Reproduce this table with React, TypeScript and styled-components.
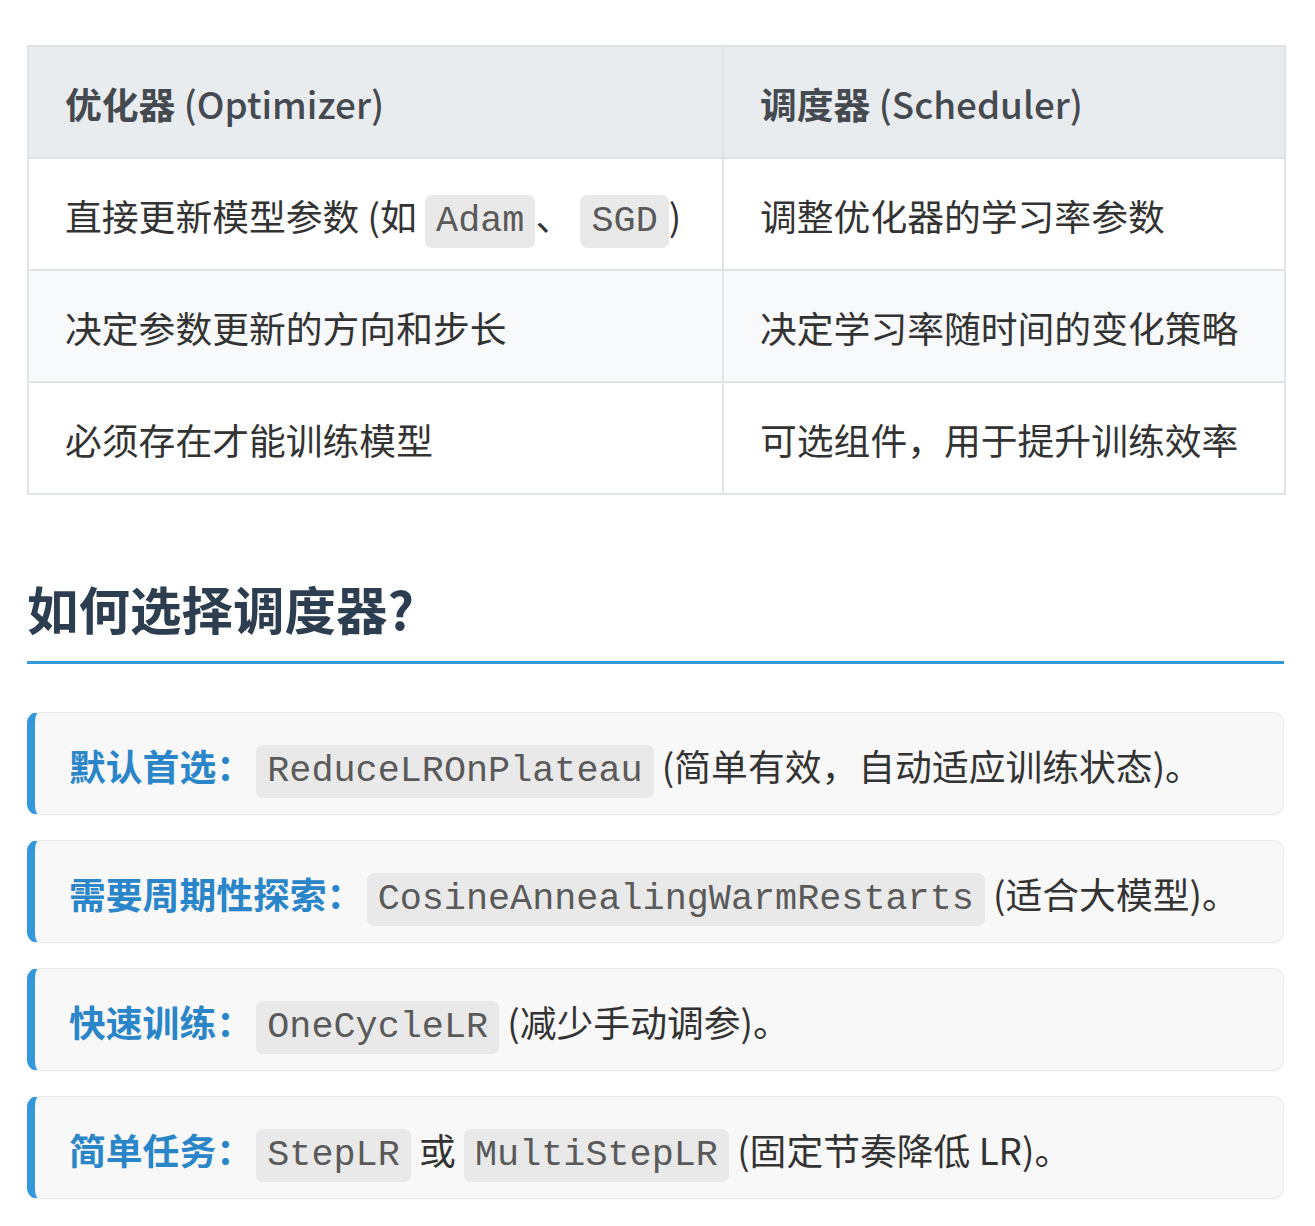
import React from "react";
import styled, { createGlobalStyle } from "styled-components";

const Global = createGlobalStyle`
  html, body { margin: 0; padding: 0; background: #ffffff; }
  body {
    font-family: "Noto Sans CJK SC", "Noto Sans", sans-serif;
    color: #333333;
  }
`;

const Page = styled.div`
  width: 1257px;
  padding: 45px 31px 20px 27px;
`;

const Table = styled.table`
  width: 1257px;
  border-collapse: collapse;
  table-layout: fixed;
  font-size: 36.8px;
  line-height: 56px;
`;

const Col = styled.col<{ $w: number }>`
  width: ${(p) => p.$w}px;
`;

const Th = styled.th`
  background: #e9ecef;
  border: 2px solid #dfe2e5;
  padding: 28px 36px 26px;
  text-align: left;
  font-weight: 700;
  color: #454a50;
`;

const ThLatin = styled.span`
  font-weight: 500;
`;

const Tr = styled.tr<{ $alt?: boolean }>`
  background: ${(p) => (p.$alt ? "#f8f9fb" : "#ffffff")};
`;

const Td = styled.td`
  border: 2px solid #e1e4e7;
  padding: 28px 36px 26px;
  color: #333333;
  white-space: nowrap;
`;

const Code = styled.code`
  font-family: "Liberation Mono", "Courier New", monospace;
  font-size: 36.8px;
  line-height: 1;
  color: #5a5a5a;
  background: #e9e9e9;
  border-radius: 7px;
  padding: 5px 11px 6px;
`;

const Heading = styled.h2`
  margin: 82px 0 0;
  padding-bottom: 22px;
  font-size: 51.5px;
  line-height: 62px;
  font-weight: 700;
  color: #2c3e50;
  border-bottom: 3px solid #3498db;
`;

const CardList = styled.div`
  display: flex;
  flex-direction: column;
  gap: 25px;
  margin-top: 48px;
`;

const Card = styled.div`
  background: #f8f8f8;
  border: 1px solid #ececec;
  border-left: 8px solid #3498db;
  border-radius: 11px;
  padding: 22px 35px 19px 34px;
  font-size: 36.8px;
  line-height: 60px;
  color: #333333;
  white-space: nowrap;
  box-shadow: 0 1px 2px rgba(0, 0, 0, 0.04);
`;

const Label = styled.strong`
  color: #2a86c8;
  font-weight: 700;
  margin-right: -5px;
`;

const rows: { left: React.ReactNode; right: string }[] = [
  {
    left: (
      <>
        直接更新模型参数 (如 <Code>Adam</Code>、 <Code>SGD</Code>)
      </>
    ),
    right: "调整优化器的学习率参数",
  },
  { left: "决定参数更新的方向和步长", right: "决定学习率随时间的变化策略" },
  { left: "必须存在才能训练模型", right: "可选组件，用于提升训练效率" },
];

export default function App() {
  return (
    <Page>
      <Global />
      <Table>
        <colgroup>
          <Col $w={695} />
          <Col $w={562} />
        </colgroup>
        <thead>
          <tr>
            <Th>
              优化器 <ThLatin>(Optimizer)</ThLatin>
            </Th>
            <Th>
              调度器 <ThLatin>(Scheduler)</ThLatin>
            </Th>
          </tr>
        </thead>
        <tbody>
          {rows.map((r, i) => (
            <Tr key={i} $alt={i % 2 === 1}>
              <Td>{r.left}</Td>
              <Td>{r.right}</Td>
            </Tr>
          ))}
        </tbody>
      </Table>

      <Heading>如何选择调度器?</Heading>

      <CardList>
        <Card>
          <Label>默认首选：</Label> <Code>ReduceLROnPlateau</Code> (简单有效，自动适应训练状态)。
        </Card>
        <Card>
          <Label>需要周期性探索：</Label> <Code>CosineAnnealingWarmRestarts</Code> (适合大模型)。
        </Card>
        <Card>
          <Label>快速训练：</Label> <Code>OneCycleLR</Code> (减少手动调参)。
        </Card>
        <Card>
          <Label>简单任务：</Label> <Code>StepLR</Code> 或 <Code>MultiStepLR</Code> (固定节奏降低 LR)。
        </Card>
      </CardList>
    </Page>
  );
}
